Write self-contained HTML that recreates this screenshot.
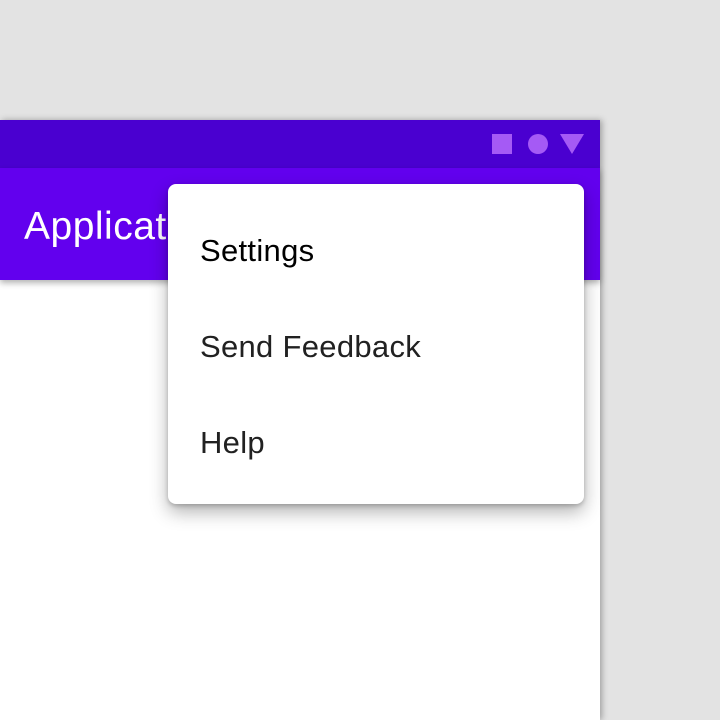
<!DOCTYPE html>
<html><head><style>
body{margin:0;width:720px;height:720px;background:#e3e3e3;position:relative;overflow:hidden;font-family:"Liberation Sans",sans-serif}
.screen{position:absolute;left:0;top:120px;width:600px;height:600px;background:#fff;box-shadow:2px 0 6px rgba(0,0,0,.3)}
.status{position:absolute;left:0;top:0;width:600px;height:48px;background:#4a00d0}
.bar{position:absolute;left:0;top:48px;width:600px;height:112px;background:#6200ee;box-shadow:0 3px 6px rgba(0,0,0,.3)}
.title{position:absolute;left:24px;top:37px;color:#fff;font-size:39px;letter-spacing:.5px}
.menu{position:absolute;left:168px;top:184px;width:416px;height:320px;background:#fff;border-radius:8px;box-shadow:0 8px 18px rgba(0,0,0,.3),0 2px 4px rgba(0,0,0,.2)}
.item{position:absolute;left:32px;font-size:31px;color:#212121;letter-spacing:.3px}
</style></head><body>
<div class="screen">
<div class="status">
<div style="position:absolute;left:492px;top:14px;width:20px;height:20px;background:#a55af5"></div>
<div style="position:absolute;left:528px;top:14px;width:20px;height:20px;border-radius:50%;background:#a55af5"></div>
<svg style="position:absolute;left:560px;top:14px" width="24" height="20"><polygon points="0,0 24,0 12,20" fill="#a55af5"/></svg>
</div>
<div class="bar"><div class="title">Application</div></div>
</div>
<div class="menu">
<div class="item" style="top:49px;color:#000">Settings</div>
<div class="item" style="top:145px">Send Feedback</div>
<div class="item" style="top:241px">Help</div>
</div>
</body></html>
